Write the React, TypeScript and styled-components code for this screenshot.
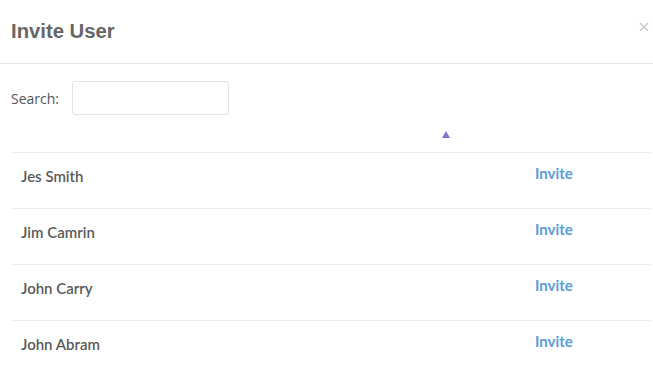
import React from "react";
import styled, { createGlobalStyle } from "styled-components";

const GlobalStyle = createGlobalStyle`
  html, body { margin: 0; padding: 0; background: #fff; }
  body { overflow: hidden; }
`;

const Modal = styled.div`
  width: 653px;
  background: #fff;
  font-family: Lato, "Open Sans", sans-serif;
`;

const Header = styled.div`
  height: 63px;
  border-bottom: 1px solid #e5e5e5;
  display: flex;
  align-items: center;
  justify-content: space-between;
  padding: 0 3px 0 11px;
  box-sizing: content-box;
`;

const Title = styled.h4`
  margin: 0;
  font-family: "Liberation Sans", Arial, sans-serif;
  font-weight: 700;
  font-size: 20.3px;
  color: #666;
`;

const Close = styled.button`
  border: 0;
  background: none;
  padding: 0;
  width: 12px;
  height: 12px;
  margin-bottom: 10px;
  display: flex;
  align-items: center;
  justify-content: center;
  cursor: pointer;
`;

const Body = styled.div`
  padding: 17px 2px 0 12px;
`;

const SearchRow = styled.div`
  display: flex;
  align-items: center;
  gap: 13px;
  margin-left: -1px;
`;

const SearchLabel = styled.label`
  font-family: "Open Sans", sans-serif;
  font-size: 14px;
  color: #555;
`;

const SearchInput = styled.input`
  width: 157px;
  height: 34px;
  box-sizing: border-box;
  border: 1px solid #e3e3e3;
  border-radius: 3px;
  outline: none;
  padding: 0 8px;
`;

const Row = styled.div<{ $head?: boolean }>`
  display: grid;
  grid-template-columns: 514px 1fr;
  height: ${(p) => (p.$head ? "37px" : "55px")};
  border-top: ${(p) => (p.$head ? "none" : "1px solid #ececec")};
  align-items: center;
`;

const SortCell = styled.div`
  display: flex;
  justify-content: flex-end;
  padding-right: 76px;
  padding-top: 2px;
`;

const Name = styled.div`
  padding-left: 9px;
  font-weight: 600;
  font-size: 15px;
  color: #5a5a5a;
  padding-bottom: 10px;
`;

const InviteLink = styled.a`
  padding-left: 9px;
  font-weight: 700;
  font-size: 15px;
  color: #5c9bd6;
  text-decoration: none;
  cursor: pointer;
  padding-bottom: 16px;
`;

const users = ["Jes Smith", "Jim Camrin", "John Carry", "John Abram"];

export default function App() {
  return (
    <>
      <GlobalStyle />
      <Modal>
        <Header>
          <Title>Invite User</Title>
          <Close aria-label="close">
            <svg width="10" height="10" viewBox="0 0 10 10">
              <path d="M1 1L9 9M9 1L1 9" stroke="#c8c8c8" strokeWidth="1.4" />
            </svg>
          </Close>
        </Header>
        <Body>
          <SearchRow>
            <SearchLabel>Search:</SearchLabel>
            <SearchInput type="text" />
          </SearchRow>
          <Row $head>
            <SortCell>
              <svg width="8" height="7" viewBox="0 0 8 7">
                <path d="M4 0L8 7H0Z" fill="#7a78d0" />
              </svg>
            </SortCell>
            <div />
          </Row>
          {users.map((u) => (
            <Row key={u}>
              <Name>{u}</Name>
              <InviteLink>Invite</InviteLink>
            </Row>
          ))}
        </Body>
      </Modal>
    </>
  );
}
